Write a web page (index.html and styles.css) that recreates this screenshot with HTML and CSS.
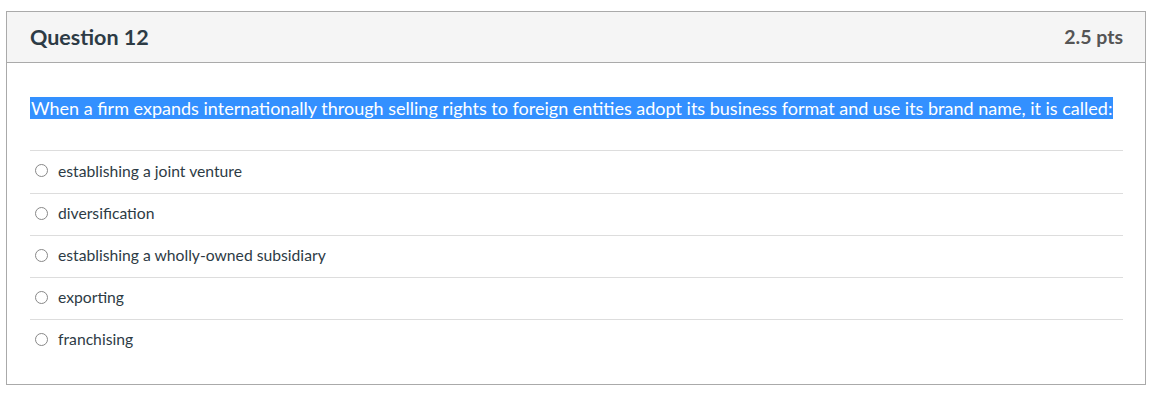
FILE: index.html
```html
<!DOCTYPE html>
<html>
<head>
<meta charset="utf-8">
<link rel="stylesheet" href="styles.css">
</head>
<body>
<div class="question">
  <div class="header">
    <span class="title">Question 12</span>
    <span class="pts">2.5 pts</span>
  </div>
  <div class="content">
    <div class="qtext"><span class="sel">When a firm expands internationally through selling rights to foreign entities adopt its business format and use its brand name, it is called:</span></div>
    <div class="answers">
      <div class="answer"><span class="radio"></span><span class="label">establishing a joint venture</span></div>
      <div class="answer"><span class="radio"></span><span class="label">diversification</span></div>
      <div class="answer"><span class="radio"></span><span class="label">establishing a wholly-owned subsidiary</span></div>
      <div class="answer"><span class="radio"></span><span class="label">exporting</span></div>
      <div class="answer"><span class="radio"></span><span class="label">franchising</span></div>
    </div>
  </div>
</div>
</body>
</html>
```
FILE: styles.css
```css
html, body {
  margin: 0;
  padding: 0;
  background: #fff;
}
body {
  font-family: Lato, "Open Sans", sans-serif;
  color: #2d3b45;
  padding: 11px 0 0 6px;
}
.question {
  width: 1138px;
  height: 372px;
  border: 1px solid #aaa;
  display: flex;
  flex-direction: column;
}
.header {
  height: 50px;
  background: #f5f5f5;
  border-bottom: 1px solid #aaa;
  display: flex;
  align-items: center;
  justify-content: space-between;
  padding: 0 22px 1px 23px;
  box-sizing: border-box;
  height: 51px;
}
.title {
  font-size: 21.5px;
  font-weight: 700;
  color: #2d3b45;
}
.pts {
  font-size: 19.5px;
  font-weight: 700;
  color: #555;
}
.content {
  padding: 0 22px 0 23px;
}
.qtext {
  margin-top: 32px;
  font-size: 18px;
  line-height: 26px;
  height: 55px;
}
.sel {
  background: #3390ff;
  color: #fff;
  padding: 0 1px;
}
.answer {
  border-top: 1px solid #ddd;
  height: 41px;
  box-sizing: border-box;
  height: 42px;
  display: flex;
  align-items: center;
  padding: 0 0 3px 5px;
  font-size: 15.7px;
}
.answer:first-child {
  height: 43px;
}
.radio {
  width: 11px;
  height: 11px;
  border: 1px solid #888;
  border-radius: 50%;
  margin-right: 10px;
  flex: none;
}
```
